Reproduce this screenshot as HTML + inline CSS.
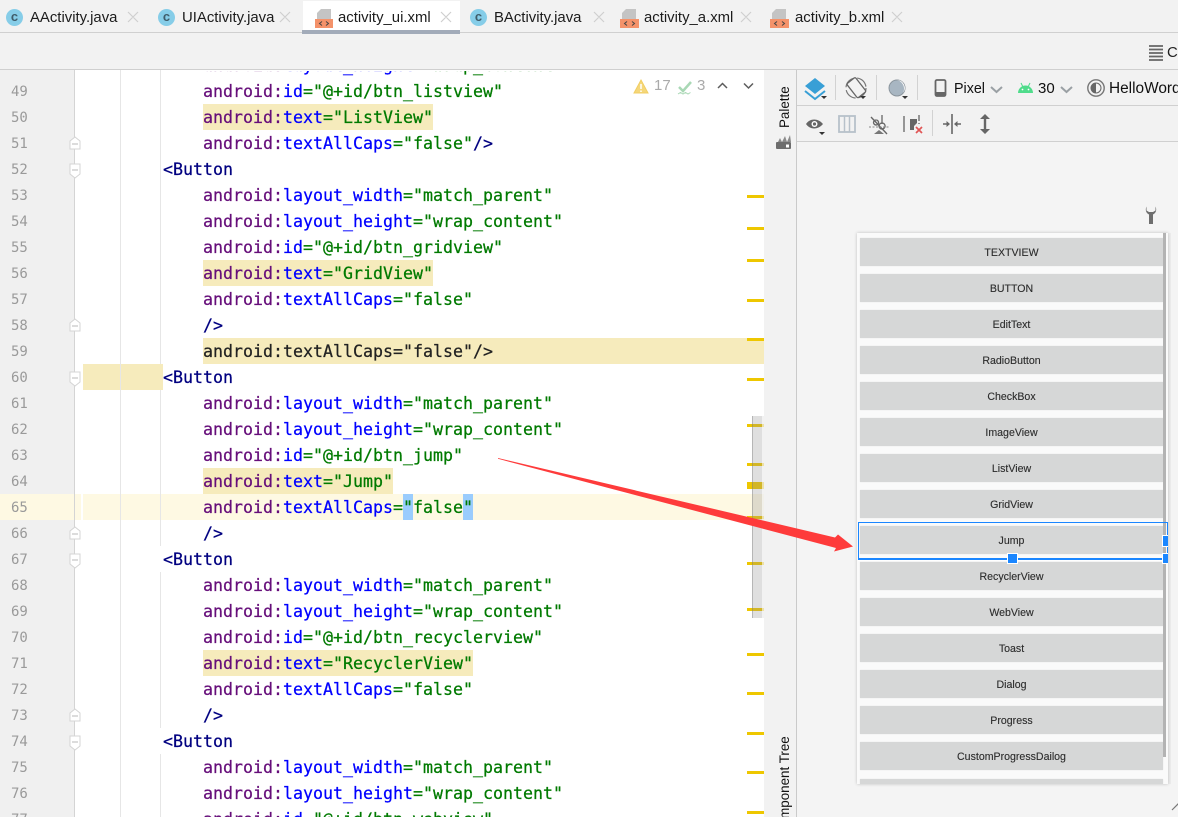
<!DOCTYPE html>
<html>
<head>
<meta charset="utf-8">
<style>
html,body{margin:0;padding:0;width:1178px;height:817px;overflow:hidden;background:#fff}
#w{position:absolute;left:0;top:0;width:1178px;height:817px;overflow:hidden;background:#fff;font-family:"Liberation Sans",sans-serif}
.a{position:absolute}
.tab{position:absolute;top:8px;font-size:14.9px;line-height:20px;color:#1c1c1c;white-space:pre}
.c{position:absolute;top:9px;width:17px;height:17px;border-radius:50%;background:#86cde8;color:#3f5d6b;font:bold 13px/15px "Liberation Sans",sans-serif;text-align:center}
.n{position:absolute;left:11px;width:20px;margin-top:1px;font:14px/26px "DejaVu Sans Mono",monospace;color:#9a9a9a;white-space:pre}
.l{position:absolute;height:26px;font:16.61px/26px "DejaVu Sans Mono",monospace;white-space:pre;color:#222;-webkit-text-stroke:.25px}
.p{color:#660e7a}.b{color:#0000ff}.g{color:#007a00}.t{color:#000080}
.h{position:absolute;height:26px;background:#f6ebbc}
.m{position:absolute;left:747px;width:17px;height:3px;background:#eec700}
.btn{position:absolute;left:860px;width:303px;height:28px;background:#d6d7d7;color:#2c2c2c;font-size:10.6px;line-height:30px;text-align:center;box-shadow:0 0 1px #e4e4e4;-webkit-text-stroke:.12px}
.d{position:absolute;width:1px;background:#d2d2d2}
.tx{position:absolute;font-size:14.3px;line-height:20px;color:#111;white-space:pre}
svg{position:absolute;overflow:visible}
</style>
</head>
<body>
<div id="w">
<!-- top bars -->
<div class="a" style="left:0;top:0;width:1178px;height:70px;background:#f2f2f2"></div>
<div class="a" style="left:0;top:32px;width:1178px;height:1px;background:#d0d0d0"></div>
<div class="a" style="left:0;top:69px;width:1178px;height:1px;background:#cfcfcf"></div>
<div class="a" style="left:303px;top:1px;width:157px;height:29px;background:#fff"></div>
<div class="a" style="left:302px;top:30px;width:158px;height:4px;background:#a2abb9"></div>

<!-- tabs -->
<div class="c" style="left:6px">c</div><div class="tab" style="left:30px">AActivity.java</div>
<div class="c" style="left:158px">c</div><div class="tab" style="left:182px">UIActivity.java</div>
<div class="tab" style="left:338px">activity_ui.xml</div>
<div class="c" style="left:470px">c</div><div class="tab" style="left:494px">BActivity.java</div>
<div class="tab" style="left:644px">activity_a.xml</div>
<div class="tab" style="left:795px">activity_b.xml</div>
<svg style="left:0;top:0" width="1178" height="34">
 <g stroke="#cfcfcf" stroke-width="1.200" fill="none">
  <path d="M128 12l10 10M138 12l-10 10M280 12l10 10M290 12l-10 10M441 12l10 10M451 12l-10 10M594 12l10 10M604 12l-10 10M741 12l10 10M751 12l-10 10M892 12l10 10M902 12l-10 10"/>
 </g>
 <g><path d="M317 19v-6l4-4h10v10z" fill="#c4c4c4"/><rect x="315" y="19" width="18" height="9" fill="#f4926a"/><path d="M322 21.500l-2.500 2 2.500 2M326 21.500l2.500 2-2.500 2" stroke="#444" fill="none"/></g>
 <g><path d="M622 19v-6l4-4h10v10z" fill="#c4c4c4"/><rect x="620" y="19" width="19" height="9" fill="#f4926a"/><path d="M627 21.500l-2.500 2 2.500 2M632 21.500l2.500 2-2.500 2" stroke="#444" fill="none"/></g>
 <g><path d="M772 19v-6l4-4h10v10z" fill="#c4c4c4"/><rect x="770" y="19" width="19" height="9" fill="#f4926a"/><path d="M777 21.500l-2.500 2 2.500 2M782 21.500l2.500 2-2.500 2" stroke="#444" fill="none"/></g>
 <path d="M1149 46h14M1149 49.500h14M1149 53h14M1149 56.500h14M1149 60h14" stroke="#666" stroke-width="1.800"/>
</svg>
<div class="tab" style="left:1167px;top:43px;color:#222">Co</div>

<!-- editor gutter -->
<div class="a" style="left:0;top:70px;width:74px;height:747px;background:#f0f0f0"></div>
<div class="a" style="left:74px;top:70px;width:1px;height:747px;background:#d4d4d4"></div>

<!-- highlights -->
<div class="a" style="left:0;top:494px;width:74px;height:26px;background:#fef9e3"></div>
<div class="a" style="left:75px;top:494px;width:6px;height:26px;background:#fef9e3"></div>
<div class="a" style="left:83px;top:494px;width:681px;height:26px;background:#fef9e3"></div>
<div class="h" style="left:203px;top:104px;width:230px"></div>
<div class="h" style="left:203px;top:260px;width:230px"></div>
<div class="h" style="left:203px;top:338px;width:561px"></div>
<div class="h" style="left:83px;top:364px;width:80px"></div>
<div class="h" style="left:203px;top:468px;width:190px"></div>
<div class="h" style="left:203px;top:650px;width:270px"></div>
<div class="a" style="left:403px;top:494px;width:10px;height:26px;background:#9accfd"></div>
<div class="a" style="left:463px;top:494px;width:10px;height:26px;background:#9accfd"></div>

<!-- indent guides -->
<div class="a" style="left:120px;top:70px;width:1px;height:747px;background:#e6e6e6"></div>
<div class="a" style="left:160px;top:70px;width:1px;height:294px;background:#e6e6e6"></div>
<div class="a" style="left:160px;top:390px;width:1px;height:156px;background:#e6e6e6"></div>
<div class="a" style="left:160px;top:572px;width:1px;height:156px;background:#e6e6e6"></div>
<div class="a" style="left:160px;top:754px;width:1px;height:63px;background:#e6e6e6"></div>

<!-- line numbers -->
<div class="n" style="top:78px">49</div><div class="n" style="top:104px">50</div><div class="n" style="top:130px">51</div><div class="n" style="top:156px">52</div><div class="n" style="top:182px">53</div><div class="n" style="top:208px">54</div><div class="n" style="top:234px">55</div><div class="n" style="top:260px">56</div><div class="n" style="top:286px">57</div><div class="n" style="top:312px">58</div><div class="n" style="top:338px">59</div><div class="n" style="top:364px">60</div><div class="n" style="top:390px">61</div><div class="n" style="top:416px">62</div><div class="n" style="top:442px">63</div><div class="n" style="top:468px">64</div><div class="n" style="top:494px">65</div><div class="n" style="top:520px">66</div><div class="n" style="top:546px">67</div><div class="n" style="top:572px">68</div><div class="n" style="top:598px">69</div><div class="n" style="top:624px">70</div><div class="n" style="top:650px">71</div><div class="n" style="top:676px">72</div><div class="n" style="top:702px">73</div><div class="n" style="top:728px">74</div><div class="n" style="top:754px">75</div><div class="n" style="top:780px">76</div><div class="n" style="top:806px">77</div>

<!-- fold markers -->
<svg style="left:0;top:0" width="90" height="817">
 <g fill="#fff" stroke="#d4d4d4">
  <path d="M70 141l5-4 5 4v8h-10z"/>
  <path d="M70 164h10v10l-5 4-5-4z"/>
  <path d="M70 323l5-4 5 4v8h-10z"/>
  <path d="M70 372h10v10l-5 4-5-4z"/>
  <path d="M70 531l5-4 5 4v8h-10z"/>
  <path d="M70 554h10v10l-5 4-5-4z"/>
  <path d="M70 713l5-4 5 4v8h-10z"/>
  <path d="M70 736h10v10l-5 4-5-4z"/>
 </g>
 <path d="M72 144h6M72 170h6M72 326h6M72 378h6M72 534h6M72 560h6M72 716h6M72 742h6" stroke="#b8b8b8"/>
</svg>

<!-- code -->
<div class="a" style="left:75px;top:71px;width:672px;height:746px;overflow:hidden">
<div class="l" style="left:128px;top:-18px"><span class="p">android:</span><span class="b">layout_height</span><span class="g">="wrap_content"</span></div>
<div class="l" style="left:128px;top:8px"><span class="p">android:</span><span class="b">id</span><span class="g">="@+id/btn_listview"</span></div>
<div class="l" style="left:128px;top:34px"><span class="p">android:</span><span class="b">text</span><span class="g">="ListView"</span></div>
<div class="l" style="left:128px;top:60px"><span class="p">android:</span><span class="b">textAllCaps</span><span class="g">="false"</span><span class="t">/&gt;</span></div>
<div class="l" style="left:88px;top:86px"><span class="t">&lt;Button</span></div>
<div class="l" style="left:128px;top:112px"><span class="p">android:</span><span class="b">layout_width</span><span class="g">="match_parent"</span></div>
<div class="l" style="left:128px;top:138px"><span class="p">android:</span><span class="b">layout_height</span><span class="g">="wrap_content"</span></div>
<div class="l" style="left:128px;top:164px"><span class="p">android:</span><span class="b">id</span><span class="g">="@+id/btn_gridview"</span></div>
<div class="l" style="left:128px;top:190px"><span class="p">android:</span><span class="b">text</span><span class="g">="GridView"</span></div>
<div class="l" style="left:128px;top:216px"><span class="p">android:</span><span class="b">textAllCaps</span><span class="g">="false"</span></div>
<div class="l t" style="left:128px;top:242px">/&gt;</div>
<div class="l" style="left:128px;top:268px">android:textAllCaps="false"/&gt;</div>
<div class="l" style="left:88px;top:294px"><span class="t">&lt;Button</span></div>
<div class="l" style="left:128px;top:320px"><span class="p">android:</span><span class="b">layout_width</span><span class="g">="match_parent"</span></div>
<div class="l" style="left:128px;top:346px"><span class="p">android:</span><span class="b">layout_height</span><span class="g">="wrap_content"</span></div>
<div class="l" style="left:128px;top:372px"><span class="p">android:</span><span class="b">id</span><span class="g">="@+id/btn_jump"</span></div>
<div class="l" style="left:128px;top:398px"><span class="p">android:</span><span class="b">text</span><span class="g">="Jump"</span></div>
<div class="l" style="left:128px;top:424px"><span class="p">android:</span><span class="b">textAllCaps</span><span class="g">="false"</span></div>
<div class="l t" style="left:128px;top:450px">/&gt;</div>
<div class="l" style="left:88px;top:476px"><span class="t">&lt;Button</span></div>
<div class="l" style="left:128px;top:502px"><span class="p">android:</span><span class="b">layout_width</span><span class="g">="match_parent"</span></div>
<div class="l" style="left:128px;top:528px"><span class="p">android:</span><span class="b">layout_height</span><span class="g">="wrap_content"</span></div>
<div class="l" style="left:128px;top:554px"><span class="p">android:</span><span class="b">id</span><span class="g">="@+id/btn_recyclerview"</span></div>
<div class="l" style="left:128px;top:580px"><span class="p">android:</span><span class="b">text</span><span class="g">="RecyclerView"</span></div>
<div class="l" style="left:128px;top:606px"><span class="p">android:</span><span class="b">textAllCaps</span><span class="g">="false"</span></div>
<div class="l t" style="left:128px;top:632px">/&gt;</div>
<div class="l" style="left:88px;top:658px"><span class="t">&lt;Button</span></div>
<div class="l" style="left:128px;top:684px"><span class="p">android:</span><span class="b">layout_width</span><span class="g">="match_parent"</span></div>
<div class="l" style="left:128px;top:710px"><span class="p">android:</span><span class="b">layout_height</span><span class="g">="wrap_content"</span></div>
<div class="l" style="left:128px;top:736px"><span class="p">android:</span><span class="b">id</span><span class="g">="@+id/btn_webview"</span></div>
</div>

<!-- markers -->
<div class="m" style="top:195px"></div><div class="m" style="top:227px"></div><div class="m" style="top:259px"></div><div class="m" style="top:299px"></div><div class="m" style="top:338px"></div><div class="m" style="top:378px"></div><div class="m" style="top:424px"></div><div class="m" style="top:463px"></div><div class="m" style="top:482px;height:7px"></div><div class="m" style="top:516px"></div><div class="m" style="top:562px"></div><div class="m" style="top:608px"></div><div class="m" style="top:653px"></div><div class="m" style="top:692px"></div><div class="m" style="top:732px"></div><div class="m" style="top:771px"></div><div class="m" style="top:811px"></div>
<div class="a" style="left:752px;top:416px;width:9px;height:202px;background:rgba(140,140,140,.28);border-left:1px solid rgba(120,120,120,.4);border-right:2px solid rgba(255,255,255,.6)"></div>

<!-- inspection widget -->
<svg style="left:630px;top:76px" width="130" height="20">
 <path d="M11 4l7 13h-14z" fill="#f5d77a" stroke="#f1ce63"/><path d="M11 8v5M11 14.500v1.500" stroke="#fff" stroke-width="1.500"/>
 <path d="M49 11l4 4 8-9" stroke="#a9d8b5" stroke-width="2.500" fill="none"/><path d="M48 18l2.500-1.500 2.500 1.500 2.500-1.500 2.500 1.500 2.500-1.500" stroke="#a9d8b5" fill="none"/>
 <path d="M88 12l4.500-4.500 4.500 4.500M114 7.500l4.500 4.500 4.500-4.500" stroke="#5c5c5c" stroke-width="1.500" fill="none"/>
</svg>
<div class="a" style="left:654px;top:76px;font-size:15px;line-height:20px;color:#aaa">17</div>
<div class="a" style="left:697px;top:76px;font-size:15px;line-height:20px;color:#aaa">3</div>

<!-- side strip -->
<div class="a" style="left:764px;top:70px;width:32px;height:747px;background:#f2f2f2"></div>
<div class="a" style="left:796px;top:70px;width:1px;height:747px;background:#cacaca"></div>
<div class="a" style="left:778px;top:128px;font-size:13.400px;line-height:14px;color:#111;white-space:pre;transform:rotate(-90deg);transform-origin:0 0">Palette</div>
<div class="a" style="left:778px;top:836px;font-size:13.400px;line-height:14px;color:#111;white-space:pre;transform:rotate(-90deg);transform-origin:0 0">Component Tree</div>
<svg style="left:775px;top:133px" width="18" height="18">
 <rect x="1" y="9" width="15" height="7" rx="1" fill="#6d6d6d"/><rect x="11" y="11.500" width="3" height="3" fill="#fff"/>
 <path d="M3 9l2-4 2 4zM7 9l3-6 2 6zM12 9l3-7 1 7z" fill="#8a8a8a"/>
</svg>

<!-- design panel -->
<div class="a" style="left:797px;top:70px;width:381px;height:747px;background:#f4f4f4"></div>
<div class="a" style="left:797px;top:70px;width:381px;height:35px;background:#f2f2f2"></div>
<div class="a" style="left:797px;top:106px;width:381px;height:35px;background:#f2f2f2"></div>
<div class="a" style="left:797px;top:105px;width:381px;height:1px;background:#d0d0d0"></div>
<div class="a" style="left:797px;top:141px;width:381px;height:1px;background:#d0d0d0"></div>
<div class="d" style="left:835px;top:75px;height:25px"></div>
<div class="d" style="left:876px;top:75px;height:25px"></div>
<div class="d" style="left:917px;top:75px;height:25px"></div>
<div class="d" style="left:932px;top:110px;height:26px"></div>
<div class="tx" style="left:954px;top:79px">Pixel</div>
<div class="tx" style="left:1038px;top:79px;font-size:15px">30</div>
<div class="tx" style="left:1109px;top:79px;font-size:15.400px">HelloWord</div>
<svg style="left:797px;top:70px" width="381" height="72">
 <!-- layers -->
 <path d="M18 8l10 8-10 8-10-8z" fill="#389fd6"/>
 <path d="M8 21l10 8 10-8" fill="none" stroke="#389fd6" stroke-width="2"/>
 <path d="M24 26h6l-3 3z" fill="#333"/>
 <!-- rotate -->
 <circle cx="59" cy="18" r="10" fill="none" stroke="#777" stroke-width="1.200" stroke-dasharray="13 3"/>
 <rect x="54" y="9" width="11" height="18" rx="1.500" transform="rotate(-38 59 18)" fill="#f2f2f2" stroke="#666" stroke-width="1.300"/>
 <path d="M63 26h6l-3 3z" fill="#333"/>
 <!-- theme circle -->
 <circle cx="100" cy="18" r="8" fill="#a8b6c2" stroke="#8a949c"/>
 <path d="M100 10a8 8 0 0 1 6 13a9 9 0 0 0-6-13z" fill="#fff"/>
 <path d="M105 26h6l-3 3z" fill="#333"/>
 <!-- phone -->
 <rect x="138.500" y="10" width="10" height="16" rx="1.500" fill="none" stroke="#666" stroke-width="1.800"/>
 <rect x="138.500" y="22" width="10" height="4" fill="#666"/>
 <!-- chevrons -->
 <path d="M194 17l5.500 5 5.500-5M264 17l5.500 5 5.500-5" fill="none" stroke="#9aa0a4" stroke-width="2"/>
 <!-- android -->
 <path d="M221 23a7.500 7.500 0 0 1 15 0z" fill="#4fdc8b"/><path d="M224 13l2 4M233 13l-2 4" stroke="#4fdc8b"/>
 <circle cx="225.500" cy="19.500" r=".9" fill="#fff"/><circle cx="231.500" cy="19.500" r=".9" fill="#fff"/>
 <!-- theme ring -->
 <circle cx="299" cy="18" r="8.200" fill="none" stroke="#777" stroke-width="1.400"/>
 <circle cx="299" cy="18" r="5" fill="none" stroke="#666"/>
 <path d="M299 13a5 5 0 0 0 0 10z" fill="#666"/>
 <!-- row 2: eye -->
 <path d="M9 54c4-6 12-6 17 0c-5 6-13 6-17 0z" fill="#666"/>
 <circle cx="17.500" cy="54" r="3" fill="#fff"/><circle cx="17.500" cy="54" r="1.600" fill="#666"/>
 <path d="M22 62h6l-3 3z" fill="#333"/>
 <!-- columns -->
 <rect x="42" y="46" width="16" height="16" fill="none" stroke="#b7c1ca" stroke-width="1.800"/>
 <path d="M47.500 46v16M52.500 46v16" stroke="#b7c1ca" stroke-width="1.500"/>
 <!-- ab -->
 <path d="M74 47l16 17" stroke="#666" stroke-width="1.400"/>
 <path d="M85 45v9M85 53a3 3 0 1 0 0.100 0M79 50a2.500 2.500 0 1 0 0.100 0" fill="none" stroke="#666" stroke-width="1.300"/>
 <path d="M72 57h20" stroke="#888" stroke-dasharray="2 1.500"/>
 <path d="M77 64l5-4 5 4z" fill="#777"/>
 <!-- error -->
 <path d="M107 46v16" stroke="#777" stroke-width="1.500"/>
 <path d="M113 49h7v4l-3 3v4h-4z" fill="#666"/><path d="M122 45v6M122 53v1" stroke="#777" stroke-width="1.500"/>
 <path d="M119 57l6 6M125 57l-6 6" stroke="#e05555" stroke-width="1.700"/>
 <!-- h-align -->
 <path d="M155 44v20" stroke="#666" stroke-width="1.600"/>
 <path d="M146 54h5M164 54h-5" stroke="#666" stroke-width="1.400"/>
 <path d="M153 54l-3.500-3v6zM157 54l3.500-3v6z" fill="#666"/>
 <!-- v-arrow -->
 <path d="M188 48v12" stroke="#666" stroke-width="2.400"/>
 <path d="M188 44l-5 5h10zM188 64l-5-5h10z" fill="#666"/>
</svg>

<!-- wrench -->
<svg style="left:1144px;top:205px" width="14" height="20">
 <path d="M2.500 1.500C1 5 2 8 5 9.500V19h4V9.500C12 8 13 5 11.500 1.500V5.500L9 7H5L2.500 5.500Z" fill="#6e6e6e"/>
</svg>

<!-- device -->
<div class="a" style="left:1166px;top:233px;width:5px;height:551px;background:#ececec"></div>
<div class="a" style="left:857px;top:233px;width:311px;height:551px;background:#fafafa;box-shadow:0 0 3px #bdbdbd"></div>
<div class="btn" style="top:238px">TEXTVIEW</div>
<div class="btn" style="top:274px">BUTTON</div>
<div class="btn" style="top:310px">EditText</div>
<div class="btn" style="top:346px">RadioButton</div>
<div class="btn" style="top:382px">CheckBox</div>
<div class="btn" style="top:418px">ImageView</div>
<div class="btn" style="top:454px">ListView</div>
<div class="btn" style="top:490px">GridView</div>
<div class="btn" style="top:526px">Jump</div>
<div class="btn" style="top:562px">RecyclerView</div>
<div class="btn" style="top:598px">WebView</div>
<div class="btn" style="top:634px">Toast</div>
<div class="btn" style="top:670px">Dialog</div>
<div class="btn" style="top:706px">Progress</div>
<div class="btn" style="top:742px">CustomProgressDailog</div>
<div class="btn" style="top:779px;height:5px"></div>
<div class="a" style="left:1163px;top:233px;width:3px;height:524px;background:#b3b3b3"></div>

<!-- selection -->
<div class="a" style="left:858px;top:522px;width:308px;height:35px;border:1px solid #1a86ff;border-bottom-width:2px;box-shadow:0 1px 0 #fff"></div>
<div class="a" style="left:1007px;top:553px;width:9px;height:9px;background:#1a86ff;border:1px solid #fff"></div>
<div class="a" style="left:1162px;top:535px;width:5px;height:10px;background:#1a86ff;border:1px solid #fff;border-right:0"></div>
<div class="a" style="left:1162px;top:553px;width:5px;height:9px;background:#1a86ff;border:1px solid #fff;border-right:0"></div>

<!-- resize mark -->
<svg style="left:1170px;top:800px" width="8" height="12"><path d="M2 10l7-7" stroke="#777" stroke-width="1.200"/></svg>

<!-- red arrow -->
<svg style="left:0;top:0" width="1178" height="817">
 <path d="M498 458L835 537.500L838 534.500L853 546.500L834 551.500L836 548L498 458.800Z" fill="#fe3b3b"/>
</svg>
</div>
</body>
</html>
